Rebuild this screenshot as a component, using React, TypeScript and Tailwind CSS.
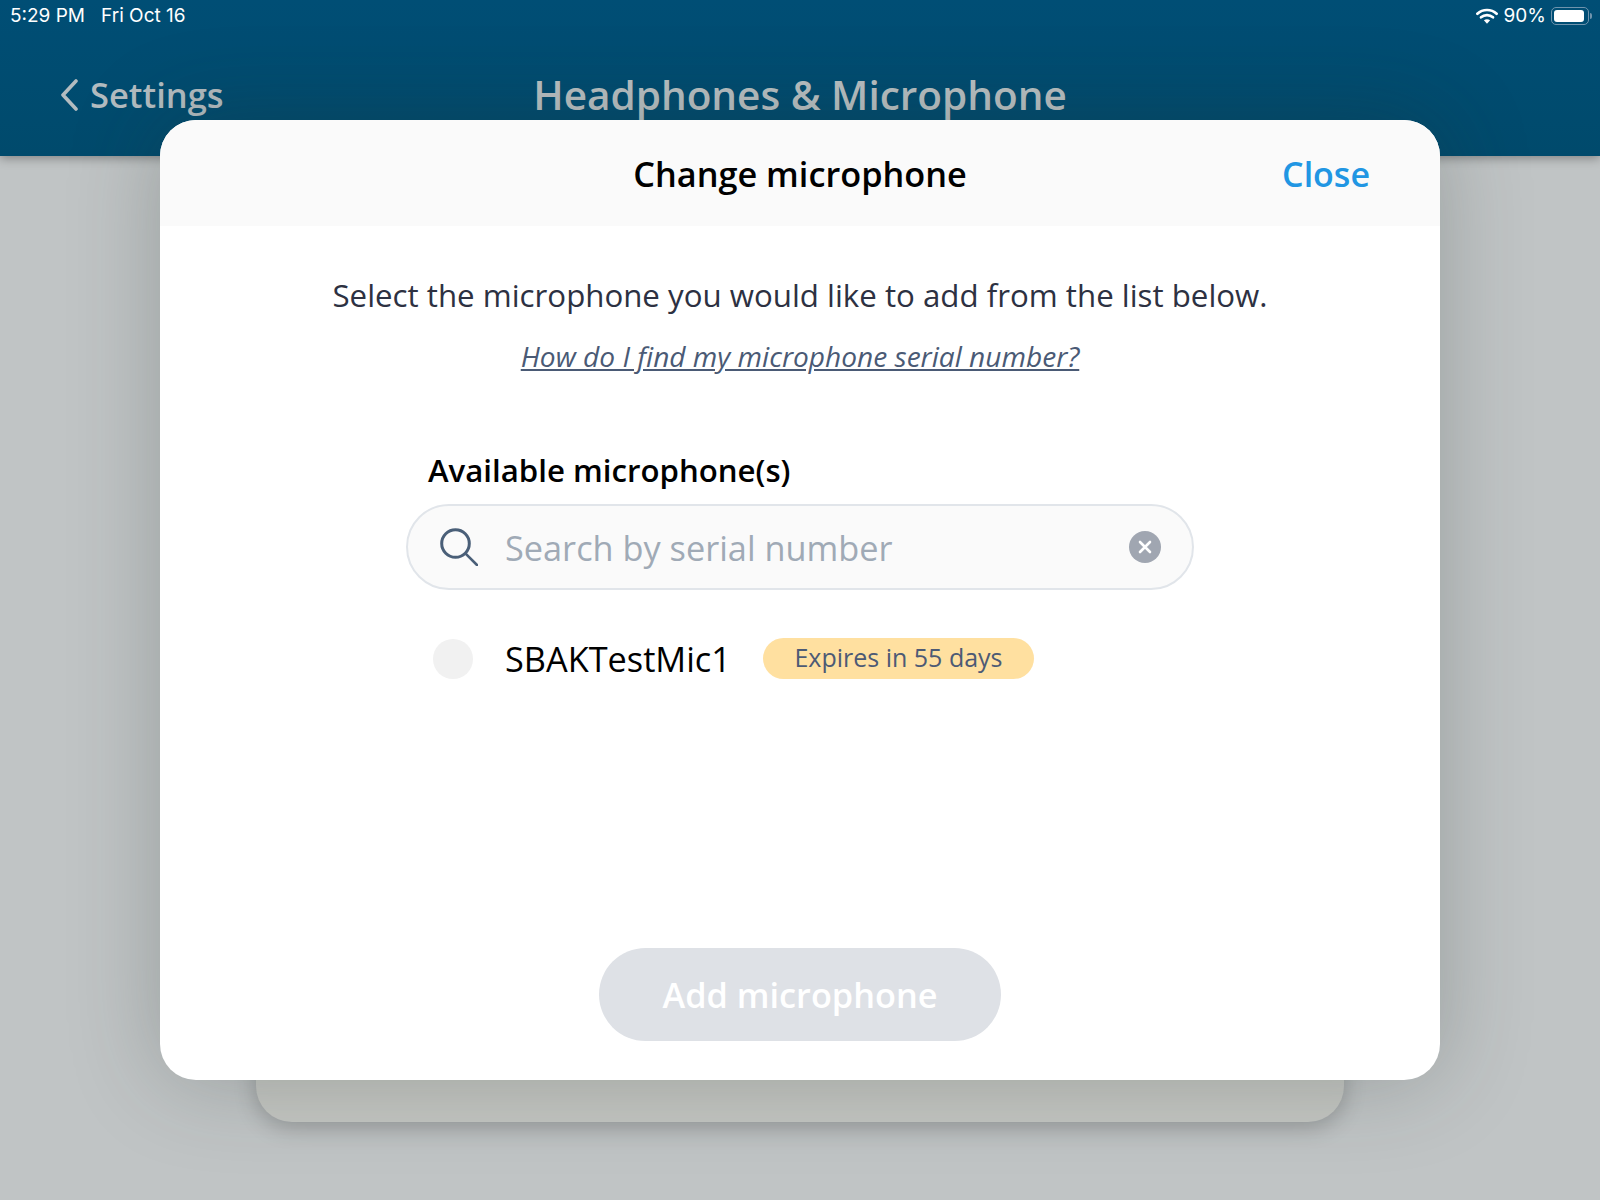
function WifiIcon() {
  return (
    <svg width="22" height="16" viewBox="0 0 22 16" fill="none" className="block">
      <path d="M1.4 5.8C6.7.7 15.3.7 20.6 5.8" stroke="#fff" strokeWidth="2.7" strokeLinecap="round" />
      <path d="M5 9.3c3.4-3 8.6-3 12 0" stroke="#fff" strokeWidth="2.7" strokeLinecap="round" />
      <path d="M7.9 12.2c1.9-1.3 4.3-1.3 6.2 0L11 15.8z" fill="#fff" />
    </svg>
  );
}

function BatteryIcon() {
  return (
    <div className="ml-[-1px] flex items-center">
      <div className="flex h-[18px] w-[38px] items-center rounded-[5px] border border-[#6f94ad] p-[2px]">
        <div className="h-full w-[30px] rounded-[3px] bg-white" />
      </div>
      <div className="ml-[1px] h-[6px] w-[2px] rounded-r-full bg-[#6f94ad]" />
    </div>
  );
}

function SearchIcon() {
  return (
    <svg width="38" height="38" viewBox="0 0 38 38" fill="none" className="block shrink-0">
      <circle cx="15.5" cy="15.5" r="13.8" stroke="#4a5f78" strokeWidth="3" />
      <path d="M25.6 25.6L37 37" stroke="#4a5f78" strokeWidth="2.6" strokeLinecap="round" />
    </svg>
  );
}

export default function App() {
  return (
    <div className="relative h-[1200px] w-[1600px] overflow-hidden bg-[#c0c4c5] font-['Open_Sans',sans-serif]">
      <header className="h-[156px] bg-gradient-to-b from-[#004e75] to-[#004a6c] shadow-[0_2px_10px_rgba(0,0,0,0.35)]">
        <div className="flex h-[32px] items-center justify-between pl-[10px] pr-[8px] font-['Inter',sans-serif] text-[19px] text-white">
          <div className="flex gap-[16px]">
            <span>5:29 PM</span>
            <span>Fri Oct 16</span>
          </div>
          <div className="flex items-center gap-[6px]">
            <WifiIcon />
            <span>90%</span>
            <BatteryIcon />
          </div>
        </div>
        <div className="relative mt-[34px] flex h-[58px] items-center justify-center">
          <div className="absolute left-[60px] top-0 flex h-full items-center gap-[12px] text-[#b3bcc0]">
            <svg width="18" height="32" viewBox="0 0 18 32" fill="none" className="block">
              <path d="M16 2L3 16l13 14" stroke="currentColor" strokeWidth="3.6" strokeLinecap="round" strokeLinejoin="round" />
            </svg>
            <span className="text-[34.5px] font-semibold">Settings</span>
          </div>
          <h1 className="text-[40.5px] font-semibold text-[#b9c0c2]">Headphones &amp; Microphone</h1>
        </div>
      </header>

      <main className="mx-[256px] h-[966px] rounded-b-[36px] bg-[#c4c6c2] shadow-[0_6px_22px_rgba(0,0,0,0.22)]" />

      <section className="absolute left-[160px] top-[120px] flex h-[960px] w-[1280px] flex-col overflow-hidden rounded-[36px] bg-white shadow-[0_0_90px_rgba(40,50,45,0.26)]">
        <div className="grid h-[106px] shrink-0 grid-cols-[1fr_auto_1fr] items-center bg-[#fafafa] px-[70px] pt-[2px]">
          <div />
          <h2 className="text-[34.3px] font-semibold text-black">Change microphone</h2>
          <button className="justify-self-end text-[34px] font-semibold text-[#2196e3]">Close</button>
        </div>

        <div className="flex flex-1 flex-col items-center pb-[39px]">
          <p className="mt-[45px] text-[31.25px] leading-[48px] text-[#2d3142]">
            Select the microphone you would like to add from the list below.
          </p>
          <a className="mt-[18px] text-[28.1px] italic leading-[38px] text-[#4a5a75] underline">
            How do I find my microphone serial number?
          </a>

          <div className="mt-[73px] w-[788px]">
            <div className="pl-[22px] text-[31.2px] font-semibold leading-[44px] text-black">Available microphone(s)</div>
            <div className="mt-[12px] flex h-[86px] items-center rounded-full border-2 border-[#e1e5ea] bg-[#fafafa] pl-[32px] pr-[31px]">
              <SearchIcon />
              <span className="ml-[27px] flex-1 pt-[2px] text-[34.3px] text-[#a0aab6]">Search by serial number</span>
              <span className="flex h-[32px] w-[32px] items-center justify-center rounded-full bg-[#a0a6b1]">
                <svg width="14" height="14" viewBox="0 0 14 14" fill="none" className="block">
                  <path d="M2 2l10 10M12 2L2 12" stroke="#fff" strokeWidth="2.6" strokeLinecap="round" />
                </svg>
              </span>
            </div>
            <div className="mt-[48px] flex items-center pl-[27px]">
              <span className="h-[40px] w-[40px] rounded-full bg-[#f1f1f1]" />
              <span className="ml-[32px] text-[34.3px] leading-[42px] text-black">SBAKTestMic1</span>
              <span className="ml-[32px] flex h-[41px] -translate-y-[1px] items-center rounded-full bg-[#ffe0a0] px-[31.5px] text-[25px] text-[#4d5a75]">
                Expires in 55 days
              </span>
            </div>
          </div>

          <button className="mt-auto h-[93px] w-[402px] rounded-full bg-[#dee1e6] text-[34.3px] font-semibold text-white">
            Add microphone
          </button>
        </div>
      </section>
    </div>
  );
}
